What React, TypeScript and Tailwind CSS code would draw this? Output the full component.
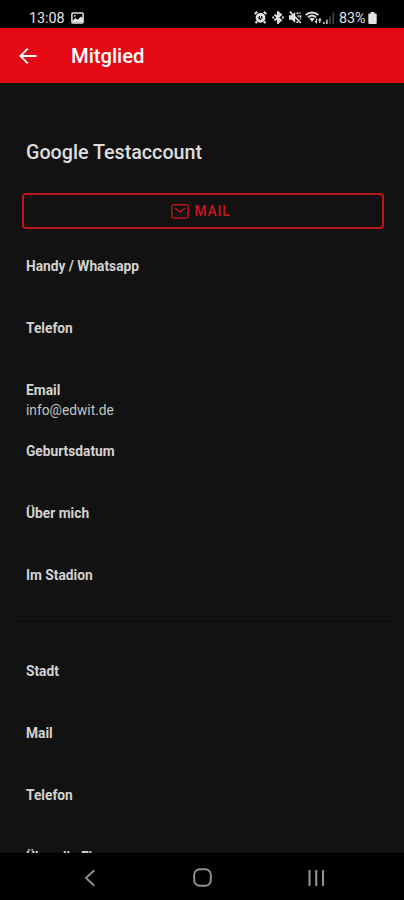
const personFields = [
  { label: 'Handy / Whatsapp', value: '' },
  { label: 'Telefon', value: '' },
  { label: 'Email', value: 'info@edwit.de' },
  { label: 'Geburtsdatum', value: '' },
  { label: 'Über mich', value: '' },
  { label: 'Im Stadion', value: '' },
];

const companyFields = [
  { label: 'Stadt', value: '' },
  { label: 'Mail', value: '' },
  { label: 'Telefon', value: '' },
  { label: 'Über die Firma', value: '' },
];

function Field({ label, value }: { label: string; value: string }) {
  return (
    <div className="h-[61.85px] text-[13.75px] leading-[20.6px] text-[#d2d2d2]">
      <dt className="font-bold">{label}</dt>
      <dd className="text-[#c4c4c4]">{value}</dd>
    </div>
  );
}

function StatusBar() {
  return (
    <div className="flex h-7 shrink-0 items-center bg-black pt-[7px] pl-[29px] pr-[27px] text-[14px] leading-[21px] text-[#e4e4e4]">
      <span className="w-[36px] pt-px text-[14.3px]">13:08</span>
      <svg className="ml-[6px]" width="13" height="12" viewBox="0 0 13 12">
        <rect x="0.9" y="0.9" width="11.2" height="10.2" rx="1" fill="none" stroke="#e4e4e4" strokeWidth="1.5" />
        <path d="M1.5 10.5V8.5L4.5 6l2 1.7L10 4.5l2 2v4z" fill="#e4e4e4" />
        <circle cx="3.8" cy="3.8" r="0.9" fill="#e4e4e4" />
      </svg>
      <div className="ml-auto flex items-center">
        <svg width="13" height="13" viewBox="0 0 13 13" fill="none" stroke="#e4e4e4">
          <circle cx="6.5" cy="6.8" r="3.5" strokeWidth="2.8" />
          <path d="M.7 3 3.2.9M12.3 3 9.8.9M3 10.5l-1.4 1.7M10 10.5l1.4 1.7" strokeWidth="2.1" />
          <path d="M6.5 4.5v2.6l1.5 1" strokeWidth="1" />
        </svg>
        <svg className="ml-[5px]" width="12" height="13" viewBox="0 0 12 13" fill="none" stroke="#e4e4e4" strokeWidth="1.9">
          <path d="m2.5 3.5 6.4 5.7L6 11.8V1.2l2.9 2.6-6.4 5.7" />
          <path d="M.2 6.5h2M9.8 6.5h2" strokeWidth="2" />
        </svg>
        <svg className="ml-[4px]" width="14" height="13" viewBox="0 0 14 13" fill="none" stroke="#e4e4e4">
          <path d="M1 4.3h2.7L7.2 1v11L3.7 8.7H1z" fill="#e4e4e4" stroke="none" />
          <path d="m1.8.6 11 11.4" strokeWidth="1.6" />
          <path d="M8.5 2.2h4M9.5 5h3v3.5M8.3 11.2h3" strokeWidth="1.6" strokeDasharray="2 .8" />
        </svg>
        <svg className="ml-[3px]" width="17" height="13" viewBox="0 0 17 13" fill="none" stroke="#dcdcdc">
          <path d="M.8 4C4.4.6 9.6.6 13.2 4M3 6.4c2.4-2.2 5.6-2.2 8 0" strokeWidth="1.9" />
          <path d="M4.4 7.6Q7 6 9.6 7.6L7 10.9z" fill="#dcdcdc" stroke="none" />
          <path d="M11.5 7.5v4l-1.4-1.3M14.8 12V8l-1.3 1.4m1.3-1.4 1.3 1.4" strokeWidth="1.2" />
        </svg>
        <svg className="ml-[1px]" width="12" height="12" viewBox="0 0 12 12">
          <path d="M0 10h1.7v2H0zM3 7.7h1.7V12H3z" fill="#bdbdbd" />
          <path d="M6.2 4.5h1.7V12H6.2zM9.5.5h1.7V12H9.5z" fill="#444" />
        </svg>
        <span className="ml-[4px] w-[28px] pt-px text-[14.3px]">83%</span>
        <svg className="ml-[1px]" width="9" height="12" viewBox="0 0 9 12" fill="#e4e4e4">
          <path d="M2.7 0h3.6v1.5h1.5q.9 0 .9.9v8.7q0 .9-.9.9H1.2q-.9 0-.9-.9V2.4q0-.9.9-.9h1.5z" />
        </svg>
      </div>
    </div>
  );
}

export default function App() {
  return (
    <div className="flex h-[900px] w-[404px] flex-col overflow-hidden bg-[#121212] font-['Roboto',sans-serif]">
      <StatusBar />
      <header className="flex h-[55px] shrink-0 items-center bg-[#e30a14] pl-[19px] text-white">
        <svg width="18" height="18" viewBox="0 0 18 18" fill="none" stroke="currentColor" strokeWidth="1.9">
          <path d="M17.4 9H1.8M8.7 1.7 1.4 9l7.3 7.3" />
        </svg>
        <h1 className="ml-[34px] pt-px text-[20.2px] font-medium leading-6">Mitglied</h1>
      </header>

      <main className="min-h-0 flex-1 overflow-hidden">
        <h2 className="pt-[58px] pl-[26px] text-[19.7px] font-medium leading-6 text-[#dedede]">Google Testaccount</h2>
        <button className="mt-[28px] ml-[22px] flex h-9 w-[362px] items-center justify-center gap-[6px] rounded-[4px] border-2 border-[#b9161d] pr-[5px] text-[13.8px] font-medium tracking-[0.8px] text-[#cf151d]">
          <svg width="18" height="15" viewBox="0 0 18 15" fill="none" stroke="#b9161d" strokeWidth="1.4" strokeLinecap="round" strokeLinejoin="round">
            <rect x="0.8" y="0.8" width="16.4" height="13.2" rx="1.7" />
            <path d="m4.2 4.2 4.8 3.9 4.8-3.9" />
          </svg>
          <span className="pt-px">MAIL</span>
        </button>
        <dl className="mt-[26.9px] pl-[26px]">
          {personFields.map((field) => (
            <Field key={field.label} {...field} />
          ))}
        </dl>
        <div className="mr-3 ml-4 -mt-[6px] h-px bg-[#0b0b0b]" />
        <dl className="mt-[39.1px] pl-[26px]">
          {companyFields.map((field) => (
            <Field key={field.label} {...field} />
          ))}
        </dl>
      </main>

      <nav className="flex h-[47px] shrink-0 items-center bg-black pt-[2px] pl-[84px] text-[#929292]">
        <svg width="12" height="18" viewBox="0 0 12 18" fill="none" stroke="currentColor" strokeWidth="1.9">
          <path d="M10.3 1.2 2 9l8.3 7.8" />
        </svg>
        <svg className="ml-[97px]" width="19" height="19" viewBox="0 0 19 19" fill="none" stroke="currentColor" strokeWidth="1.9">
          <rect x="1.2" y="1.2" width="16.6" height="16.6" rx="5.5" />
        </svg>
        <svg className="ml-[95.5px]" width="17" height="18" viewBox="0 0 17 18" fill="none" stroke="currentColor" strokeWidth="2.1">
          <path d="M1.5 1v16M8.2 1v16M15 1v16" />
        </svg>
      </nav>
    </div>
  );
}
